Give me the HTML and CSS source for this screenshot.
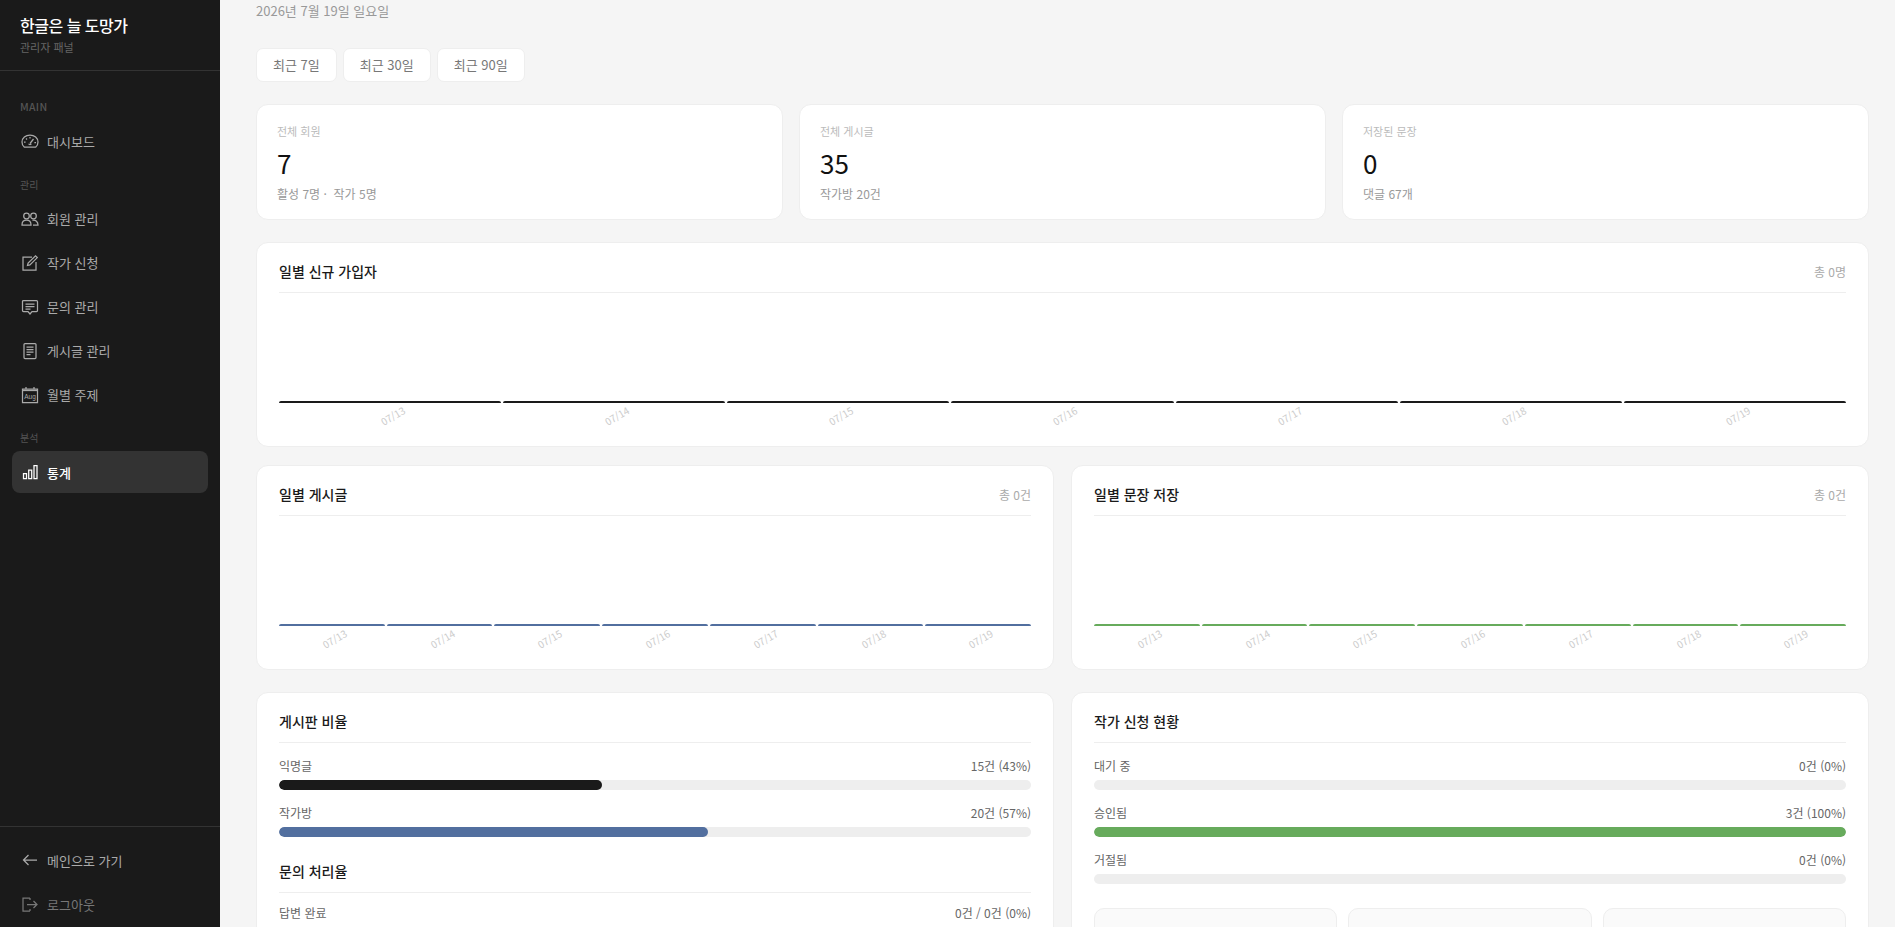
FILE: index.html
```html
<!doctype html>
<html lang="ko">
  <head>
    <meta charset="utf-8" />
    <meta name="viewport" content="width=device-width, initial-scale=1.0" />
    <title>관리자 패널 - 통계</title>
    <link rel="stylesheet" href="styles.css">
  </head>

  <body>
    <div class="layout">
      <aside class="sidebar">
        <div class="brand">
          <div class="brand_title">한글은 늘 도망가</div>
          <div class="brand_sub">관리자 패널</div>
        </div>

        <nav class="nav">
          <div class="nav_label nav_label_first">MAIN</div>
          <a class="nav_item">
            <svg class="nav_icon" viewBox="0 0 18 18"><path d="M3.200 15h11.600c1.300-1 2.200-2.900 2.200-5 0-3.900-3.600-7-8-7s-8 3.100-8 7c0 2.100.9 4 2.200 5z"/><path d="M9 11.500l3.500-4.500M7.600 11.800a1.600 1.600 0 0 0 2.800 0M3 10h1.600M13.400 10.500H15M5 6.500l1 1M9 5v1.500"/></svg>
            대시보드
          </a>

          <div class="nav_label">관리</div>
          <a class="nav_item">
            <svg class="nav_icon" viewBox="0 0 18 18"><circle cx="5.500" cy="6" r="2.800"/><circle cx="12.500" cy="6" r="2.800"/><path d="M1 15c0-3 2-4.800 4.500-4.800S10 12 10 15zM11.500 10.300c3.200-.6 5.500 1.400 5.500 4.700h-5"/></svg>
            회원 관리
          </a>
          <a class="nav_item">
            <svg class="nav_icon" viewBox="0 0 18 18"><path d="M11 3H2v13h13V8"/><path d="M6.500 11.500l.6-2.400 7.400-7.300 1.800 1.800-7.400 7.300z"/></svg>
            작가 신청
          </a>
          <a class="nav_item">
            <svg class="nav_icon" viewBox="0 0 18 18"><path d="M2.500 2.500h13a1 1 0 0 1 1 1v9a1 1 0 0 1-1 1H11L9 16l-2-2.500H2.500a1 1 0 0 1-1-1v-9a1 1 0 0 1 1-1z"/><path d="M4.500 6h9M4.500 8.500h9M4.500 11h5"/></svg>
            문의 관리
          </a>
          <a class="nav_item">
            <svg class="nav_icon" viewBox="0 0 18 18"><path d="M4 1.500h10a1 1 0 0 1 1 1v13a1 1 0 0 1-1 1H4a1 1 0 0 1-1-1v-13a1 1 0 0 1 1-1z"/><path d="M5.500 5h7M5.500 7.500h7M5.500 10h7M5.500 12.500h4"/></svg>
            게시글 관리
          </a>
          <a class="nav_item">
            <svg class="nav_icon" viewBox="0 0 18 18"><path d="M1.500 3h15v13.500h-15zM5 1v2M13 1v2"/><path d="M1.500 4.500h15"/><text class="nav_icon_text" x="9" y="13" text-anchor="middle">Aug</text></svg>
            월별 주제
          </a>

          <div class="nav_label">분석</div>
          <a class="nav_item nav_item_active">
            <svg class="nav_icon" viewBox="0 0 18 18"><path d="M2.500 10.500h3v5h-3zM7.700 7h3v8.500h-3zM13 2.500h3v13h-3z"/></svg>
            통계
          </a>
        </nav>

        <div class="sidebar_bottom">
          <a class="nav_item">
            <svg class="nav_icon" viewBox="0 0 18 18"><path d="M16 9H2.500M7.500 4L2.500 9l5 5"/></svg>
            메인으로 가기
          </a>
          <a class="nav_item nav_item_dim">
            <svg class="nav_icon" viewBox="0 0 18 18"><path d="M9 3H2v13h7M9 3v2M9 14v2M6 9.500h10M12.500 6l3.500 3.500-3.500 3.500"/></svg>
            로그아웃
          </a>
        </div>
      </aside>

      <main class="main">
        <div class="page_date">2026년 7월 19일 일요일</div>

        <div class="range_row">
          <button class="range_btn">최근 7일</button>
          <button class="range_btn">최근 30일</button>
          <button class="range_btn">최근 90일</button>
        </div>

        <div class="stat_row">
          <div class="card stat_card">
            <div class="stat_label">전체 회원</div>
            <div class="stat_value">7</div>
            <div class="stat_sub">활성 7명 ·&nbsp; 작가 5명</div>
          </div>
          <div class="card stat_card">
            <div class="stat_label">전체 게시글</div>
            <div class="stat_value">35</div>
            <div class="stat_sub">작가방 20건</div>
          </div>
          <div class="card stat_card">
            <div class="stat_label">저장된 문장</div>
            <div class="stat_value">0</div>
            <div class="stat_sub">댓글 67개</div>
          </div>
        </div>

        <div class="card chart_card chart_full">
          <div class="card_head">
            <div class="card_title">일별 신규 가입자</div>
            <div class="card_total">총 0명</div>
          </div>
          <div class="chart">
            <div class="chart_col"><div class="chart_bar bar_dark"></div><div class="chart_tick">07/13</div></div>
            <div class="chart_col"><div class="chart_bar bar_dark"></div><div class="chart_tick">07/14</div></div>
            <div class="chart_col"><div class="chart_bar bar_dark"></div><div class="chart_tick">07/15</div></div>
            <div class="chart_col"><div class="chart_bar bar_dark"></div><div class="chart_tick">07/16</div></div>
            <div class="chart_col"><div class="chart_bar bar_dark"></div><div class="chart_tick">07/17</div></div>
            <div class="chart_col"><div class="chart_bar bar_dark"></div><div class="chart_tick">07/18</div></div>
            <div class="chart_col"><div class="chart_bar bar_dark"></div><div class="chart_tick">07/19</div></div>
          </div>
        </div>

        <div class="two_col chart_row">
          <div class="card chart_card">
            <div class="card_head">
              <div class="card_title">일별 게시글</div>
              <div class="card_total">총 0건</div>
            </div>
            <div class="chart">
              <div class="chart_col"><div class="chart_bar bar_blue"></div><div class="chart_tick">07/13</div></div>
              <div class="chart_col"><div class="chart_bar bar_blue"></div><div class="chart_tick">07/14</div></div>
              <div class="chart_col"><div class="chart_bar bar_blue"></div><div class="chart_tick">07/15</div></div>
              <div class="chart_col"><div class="chart_bar bar_blue"></div><div class="chart_tick">07/16</div></div>
              <div class="chart_col"><div class="chart_bar bar_blue"></div><div class="chart_tick">07/17</div></div>
              <div class="chart_col"><div class="chart_bar bar_blue"></div><div class="chart_tick">07/18</div></div>
              <div class="chart_col"><div class="chart_bar bar_blue"></div><div class="chart_tick">07/19</div></div>
            </div>
          </div>
          <div class="card chart_card">
            <div class="card_head">
              <div class="card_title">일별 문장 저장</div>
              <div class="card_total">총 0건</div>
            </div>
            <div class="chart">
              <div class="chart_col"><div class="chart_bar bar_green"></div><div class="chart_tick">07/13</div></div>
              <div class="chart_col"><div class="chart_bar bar_green"></div><div class="chart_tick">07/14</div></div>
              <div class="chart_col"><div class="chart_bar bar_green"></div><div class="chart_tick">07/15</div></div>
              <div class="chart_col"><div class="chart_bar bar_green"></div><div class="chart_tick">07/16</div></div>
              <div class="chart_col"><div class="chart_bar bar_green"></div><div class="chart_tick">07/17</div></div>
              <div class="chart_col"><div class="chart_bar bar_green"></div><div class="chart_tick">07/18</div></div>
              <div class="chart_col"><div class="chart_bar bar_green"></div><div class="chart_tick">07/19</div></div>
            </div>
          </div>
        </div>

        <div class="two_col">
          <div class="card ratio_card">
            <div class="card_head">
              <div class="card_title">게시판 비율</div>
            </div>
            <div class="ratio">
              <div class="ratio_text"><span>익명글</span><span>15건 (43%)</span></div>
              <div class="ratio_track"><div class="ratio_fill bar_dark" style="width: 43%"></div></div>
            </div>
            <div class="ratio">
              <div class="ratio_text"><span>작가방</span><span>20건 (57%)</span></div>
              <div class="ratio_track"><div class="ratio_fill bar_blue" style="width: 57%"></div></div>
            </div>
            <div class="card_head card_head_next">
              <div class="card_title">문의 처리율</div>
            </div>
            <div class="ratio">
              <div class="ratio_text"><span>답변 완료</span><span>0건 / 0건 (0%)</span></div>
              <div class="ratio_track"><div class="ratio_fill bar_green" style="width: 0%"></div></div>
            </div>
          </div>

          <div class="card ratio_card">
            <div class="card_head">
              <div class="card_title">작가 신청 현황</div>
            </div>
            <div class="ratio">
              <div class="ratio_text"><span>대기 중</span><span>0건 (0%)</span></div>
              <div class="ratio_track"><div class="ratio_fill bar_green" style="width: 0%"></div></div>
            </div>
            <div class="ratio">
              <div class="ratio_text"><span>승인됨</span><span>3건 (100%)</span></div>
              <div class="ratio_track"><div class="ratio_fill bar_green" style="width: 100%"></div></div>
            </div>
            <div class="ratio">
              <div class="ratio_text"><span>거절됨</span><span>0건 (0%)</span></div>
              <div class="ratio_track"><div class="ratio_fill bar_green" style="width: 0%"></div></div>
            </div>
            <div class="mini_row">
              <div class="mini_box"></div>
              <div class="mini_box"></div>
              <div class="mini_box"></div>
            </div>
          </div>
        </div>
      </main>
    </div>
  </body>
</html>
```

FILE: styles.css
```css
* {
  box-sizing: border-box;
}

html,
body {
  height: 100%;
}

body {
  margin: 0;
  overflow: hidden;
  background-color: #f5f5f5;
  font-family: "Noto Sans CJK KR", "Noto Sans", sans-serif;
  color: #1a1a1a;
}

.layout {
  display: flex;
  height: 100vh;
}

/* sidebar */
.sidebar {
  width: 220px;
  flex-shrink: 0;
  display: flex;
  flex-direction: column;
  background-color: #1a1a1a;
}

.brand {
  height: 71px;
  padding: 13px 20px 0;
  border-bottom: 1px solid #333;
}

.brand_title {
  font-size: 16px;
  line-height: 24px;
  font-weight: 500;
  letter-spacing: -0.5px;
  color: #fff;
}

.brand_sub {
  margin-top: 1px;
  font-size: 11px;
  line-height: 18px;
  color: #666;
}

.nav {
  flex: 1;
  padding: 0 12px;
}

.nav_label {
  height: 22px;
  margin: 11.6px 0 2px;
  padding-left: 8px;
  font-size: 10px;
  line-height: 22px;
  color: #555;
}

.nav_label_first {
  margin-top: 25px;
  font-size: 10.5px;
  font-weight: 500;
  letter-spacing: 0.3px;
}

.nav_item {
  display: flex;
  align-items: center;
  gap: 8px;
  height: 42px;
  margin-bottom: 2px;
  padding-left: 9px;
  border-radius: 8px;
  font-size: 13px;
  color: #aaa;
}

.nav_item_active {
  background-color: #333;
  color: #fff;
  font-weight: 500;
}

.nav_item_dim {
  color: #777;
}

.nav_icon {
  width: 18px;
  height: 18px;
  flex-shrink: 0;
  fill: none;
  stroke: currentColor;
  stroke-width: 1.25;
}

.nav_icon_text {
  fill: currentColor;
  stroke: none;
  font-family: "Liberation Sans", sans-serif;
  font-size: 6.5px;
}

.sidebar_bottom {
  padding: 12px 12px 0;
  height: 101px;
  border-top: 1px solid #333;
}

/* main */
.main {
  flex: 1;
  min-width: 0;
  padding: 0 26px 0 36px;
}

.page_date {
  font-size: 13px;
  line-height: 22px;
  color: #999;
}

.range_row {
  display: flex;
  gap: 6px;
  margin-top: 26px;
}

.range_btn {
  height: 34px;
  padding: 0 16px;
  background-color: #fff;
  border: 1px solid #eee;
  border-radius: 7px;
  font-family: inherit;
  font-size: 13px;
  line-height: 18px;
  color: #777;
}

.card {
  background-color: #fff;
  border: 1px solid #eee;
  border-radius: 12px;
}

.stat_row {
  display: grid;
  grid-template-columns: repeat(3, 1fr);
  gap: 16px;
  margin-top: 22px;
}

.stat_card {
  height: 116px;
  padding: 18px 20px 0;
}

.stat_label {
  font-size: 11px;
  line-height: 16px;
  color: #bbb;
}

.stat_value {
  margin-top: 6px;
  font-size: 26px;
  line-height: 36px;
  color: #111;
}

.stat_sub {
  margin-top: 4px;
  font-size: 12px;
  line-height: 18px;
  color: #999;
}

.card_head {
  display: flex;
  justify-content: space-between;
  align-items: center;
  padding-bottom: 11px;
  border-bottom: 1px solid #eee;
}

.card_head_next {
  margin-top: 24px;
}

.card_title {
  font-size: 14px;
  line-height: 20px;
  font-weight: 500;
  color: #1a1a1a;
}

.card_total {
  font-size: 12px;
  color: #aaa;
}

.chart_card {
  height: 205px;
  padding: 18px 22px 0;
}

.chart_full {
  margin-top: 22px;
}

.chart_row {
  margin-top: 18px;
}

.two_col {
  display: grid;
  grid-template-columns: 1fr 1fr;
  gap: 17px;
}

.two_col + .two_col {
  margin-top: 22px;
}

.chart {
  display: flex;
  gap: 2px;
  padding-top: 108px;
}

.chart_col {
  flex: 1;
  min-width: 0;
  display: flex;
  flex-direction: column;
  align-items: stretch;
}

.chart_bar {
  height: 2px;
  border-radius: 2px 2px 0 0;
}

.chart_tick {
  margin-top: 6px;
  text-align: center;
  font-size: 10px;
  line-height: 14px;
  color: #ccc;
  transform: translateX(3px) rotate(-30deg);
}

.bar_dark {
  background-color: #1a1a1a;
}

.bar_blue {
  background-color: #526f9f;
}

.bar_green {
  background-color: #67ab5c;
}

.ratio_card {
  height: 300px;
  padding: 18px 22px 0;
}

.ratio {
  margin-top: 14px;
}

.ratio + .ratio {
  margin-top: 14px;
}

.card_head_next + .ratio {
  margin-top: 11px;
}

.ratio_text {
  display: flex;
  justify-content: space-between;
  font-size: 12px;
  line-height: 18px;
  color: #666;
}

.ratio_track {
  height: 10px;
  margin-top: 5px;
  background-color: #eee;
  border-radius: 6px;
  overflow: hidden;
}

.ratio_fill {
  height: 100%;
  border-radius: 6px;
}

.mini_row {
  display: grid;
  grid-template-columns: repeat(3, 1fr);
  gap: 11px;
  margin-top: 24px;
}

.mini_box {
  height: 80px;
  background-color: #fafafa;
  border: 1px solid #eee;
  border-radius: 10px;
}
```
